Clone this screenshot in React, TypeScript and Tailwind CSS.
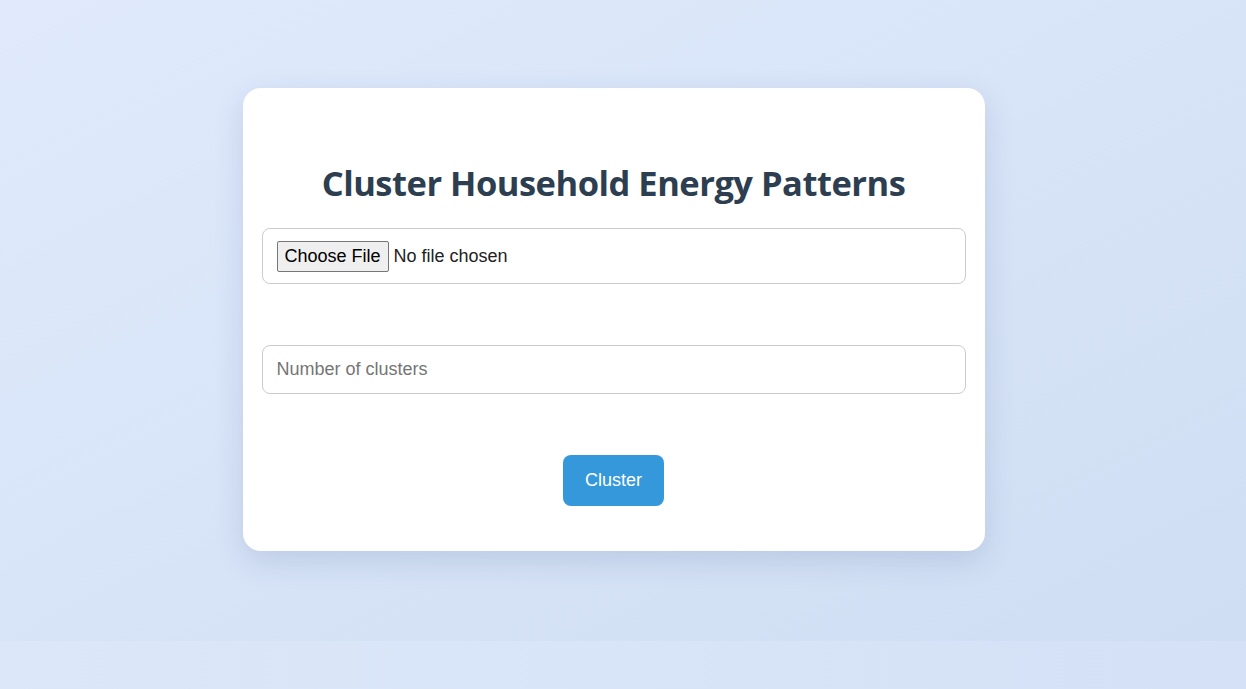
import React from 'react';

const App = () => {
  return (
    <div className="w-full font-['Liberation_Sans',Arial,sans-serif]">
      <section className="h-[641px] bg-gradient-to-br from-[#e0eafc] to-[#cfdef3] flex items-start justify-center pt-[88px] pr-[19px]">
        <div className="w-[742px] bg-white rounded-[18px] shadow-[0_10px_30px_rgba(40,70,120,0.15)] px-[19px] pt-[75px] pb-[45px]">
          <h2 className="text-center text-[34.5px] leading-[40px] font-bold text-[#2c3e50] font-['Open_Sans',sans-serif] tracking-[-0.5px] mb-[25px]">
            Cluster Household Energy Patterns
          </h2>
          <form className="flex flex-col" onSubmit={(e) => e.preventDefault()}>
            <input
              type="file"
              className="w-full border border-[#ccc] rounded-lg px-[14px] py-[11.5px] text-[18px] leading-normal text-[#222] bg-white file:mr-[5px] file:bg-[#efefef] file:border file:border-solid file:border-[#767676] file:rounded-[2px] file:px-[7px] file:py-[1px] file:text-black file:text-[18px] file:leading-normal"
            />
            <input
              type="number"
              placeholder="Number of clusters"
              className="mt-[61px] w-full h-[49px] border border-[#ccc] rounded-lg px-[14px] text-[18px] leading-normal text-[#222] placeholder:text-[#757575] outline-none"
            />
            <div className="mt-[61px] flex justify-center">
              <button
                type="submit"
                className="h-[51px] px-[22px] bg-[#3498db] text-white text-[18px] leading-normal rounded-lg"
              >
                Cluster
              </button>
            </div>
          </form>
        </div>
      </section>
      <div className="h-[48px] bg-gradient-to-r from-[#dce7f9] to-[#d4e1f6]" />
    </div>
  );
};

export default App;
